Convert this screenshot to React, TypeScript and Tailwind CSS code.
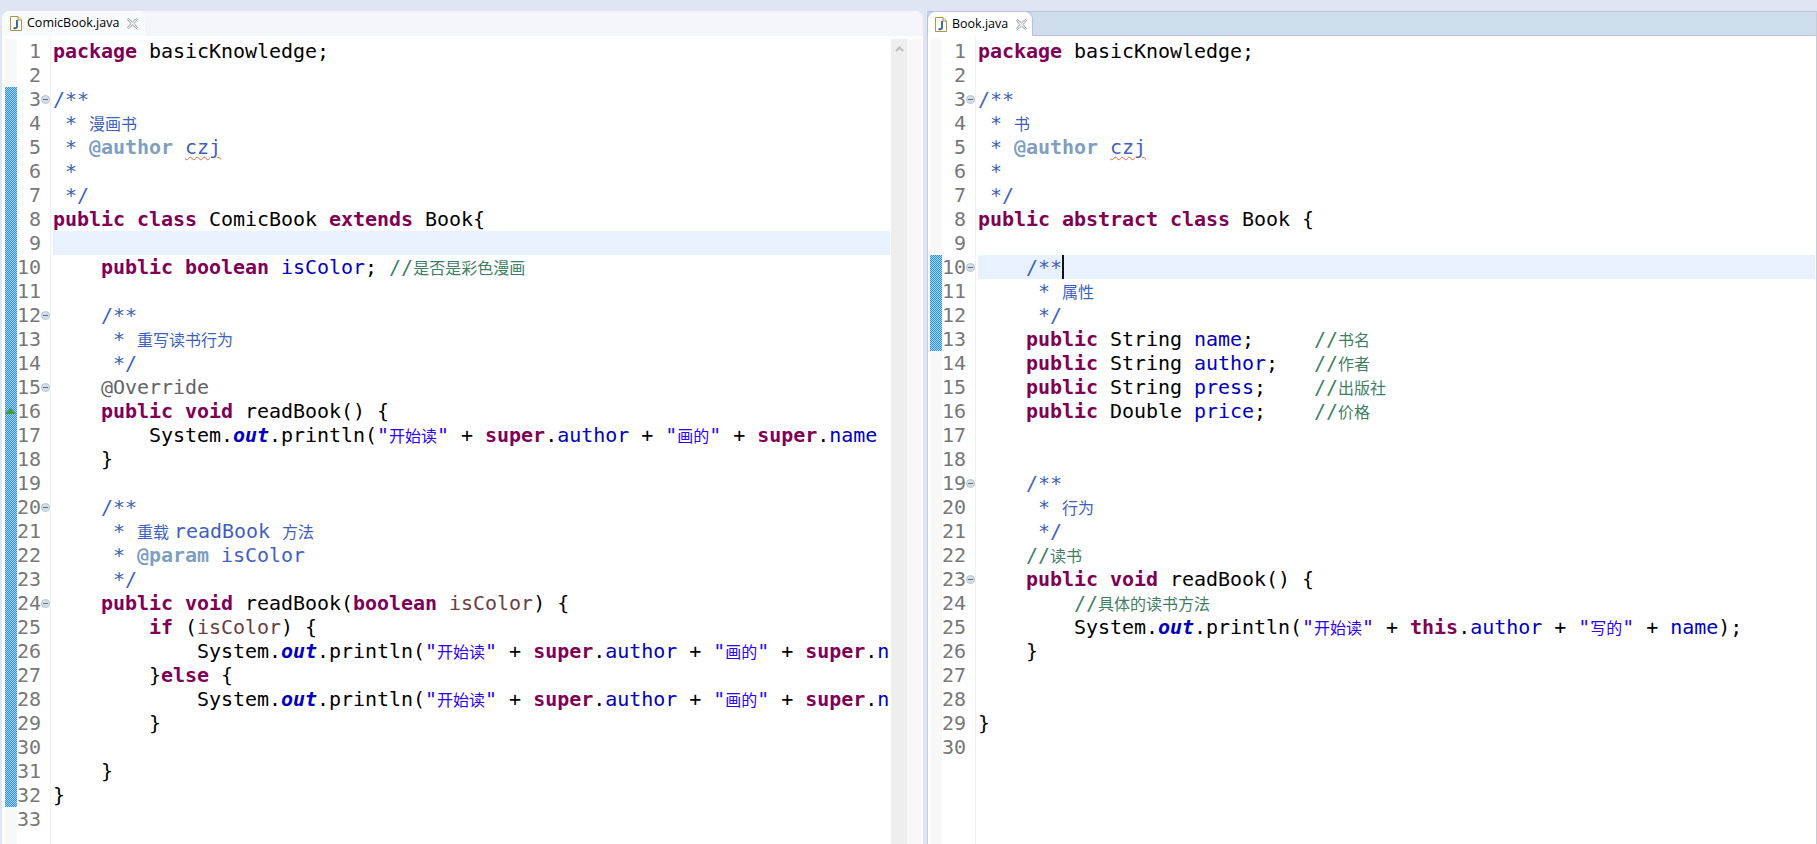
import React from "react";

type Tok = [string, string];
type Line = Tok[];

const STYLE: Record<string, string> = {
  d: "text-black",
  k: "text-[#7f0055] font-bold",
  f: "text-[#0000c0]",
  o: "text-[#0000c0] italic font-bold",
  s: "text-[#2a00ff]",
  j: "text-[#3f5fbf]",
  t: "text-[#7f9fbf] font-bold",
  c: "text-[#3f7f5f]",
  a: "text-[#646464]",
  v: "text-[#6a3e3e]",
  w: "text-[#3f5fbf] underline decoration-wavy decoration-[#e8603c] decoration-1 underline-offset-2",
};

function Tk({ kind, text }: { kind: string; text: string }) {
  if (kind === "gap") return <span className="inline-block w-[5px]" />;
  if (kind === "caret") return <span className="inline-block w-[2px] h-[24px] -mr-[2px] bg-[#111] align-top" />;
  const parts = text.split(/([\u4e00-\u9fff]+)/).filter(Boolean);
  return (
    <span className={STYLE[kind]}>
      {parts.map((p, i) =>
        /[\u4e00-\u9fff]/.test(p) ? (
          <span key={i} className="text-[16px] tracking-normal font-normal not-italic font-['Noto_Sans_CJK_SC',sans-serif]">
            {p}
          </span>
        ) : (
          <span key={i}>{p}</span>
        )
      )}
    </span>
  );
}

const L_PRINT = (ind: string, n: string): Line => [
  [ind + "System.", "d"],
  ["out", "o"],
  [".println(", "d"],
  ['"开始读"', "s"],
  [" + ", "d"],
  ["super", "k"],
  [".", "d"],
  ["author", "f"],
  [" + ", "d"],
  ['"画的"', "s"],
  [" + ", "d"],
  ["super", "k"],
  [".", "d"],
  [n, "f"],
];

const LEFT: Line[] = [
  [["package", "k"], [" basicKnowledge;", "d"]],
  [],
  [["/**", "j"]],
  [[" * 漫画书", "j"]],
  [[" * ", "j"], ["@author", "t"], [" ", "j"], ["czj", "w"]],
  [[" *", "j"]],
  [[" */", "j"]],
  [["public", "k"], [" ", "d"], ["class", "k"], [" ComicBook ", "d"], ["extends", "k"], [" Book{", "d"]],
  [],
  [["    ", "d"], ["public", "k"], [" ", "d"], ["boolean", "k"], [" ", "d"], ["isColor", "f"], ["; ", "d"], ["//是否是彩色漫画", "c"]],
  [],
  [["    /**", "j"]],
  [["     * 重写读书行为", "j"]],
  [["     */", "j"]],
  [["    @Override", "a"]],
  [["    ", "d"], ["public", "k"], [" ", "d"], ["void", "k"], [" readBook() {", "d"]],
  L_PRINT("        ", "name"),
  [["    }", "d"]],
  [],
  [["    /**", "j"]],
  [["     * 重载", "j"], ["", "gap"], ["readBook 方法", "j"]],
  [["     * ", "j"], ["@param", "t"], [" isColor", "j"]],
  [["     */", "j"]],
  [["    ", "d"], ["public", "k"], [" ", "d"], ["void", "k"], [" readBook(", "d"], ["boolean", "k"], [" ", "d"], ["isColor", "v"], [") {", "d"]],
  [["        ", "d"], ["if", "k"], [" (", "d"], ["isColor", "v"], [") {", "d"]],
  L_PRINT("            ", "n"),
  [["        }", "d"], ["else", "k"], [" {", "d"]],
  L_PRINT("            ", "n"),
  [["        }", "d"]],
  [],
  [["    }", "d"]],
  [["}", "d"]],
  [],
];

const field = (type: string, name: string, pad: string, cmt: string): Line => [
  ["    ", "d"],
  ["public", "k"],
  [" " + type + " ", "d"],
  [name, "f"],
  [";" + pad, "d"],
  [cmt, "c"],
];

const RIGHT: Line[] = [
  [["package", "k"], [" basicKnowledge;", "d"]],
  [],
  [["/**", "j"]],
  [[" * 书", "j"]],
  [[" * ", "j"], ["@author", "t"], [" ", "j"], ["czj", "w"]],
  [[" *", "j"]],
  [[" */", "j"]],
  [["public", "k"], [" ", "d"], ["abstract", "k"], [" ", "d"], ["class", "k"], [" Book {", "d"]],
  [],
  [["    /**", "j"], ["", "caret"]],
  [["     * 属性", "j"]],
  [["     */", "j"]],
  field("String", "name", "     ", "//书名"),
  field("String", "author", "   ", "//作者"),
  field("String", "press", "    ", "//出版社"),
  field("Double", "price", "    ", "//价格"),
  [],
  [],
  [["    /**", "j"]],
  [["     * 行为", "j"]],
  [["     */", "j"]],
  [["    //读书", "c"]],
  [["    ", "d"], ["public", "k"], [" ", "d"], ["void", "k"], [" readBook() {", "d"]],
  [["        ", "d"], ["//具体的读书方法", "c"]],
  [
    ["        System.", "d"],
    ["out", "o"],
    [".println(", "d"],
    ['"开始读"', "s"],
    [" + ", "d"],
    ["this", "k"],
    [".", "d"],
    ["author", "f"],
    [" + ", "d"],
    ['"写的"', "s"],
    [" + ", "d"],
    ["name", "f"],
    [");", "d"],
  ],
  [["    }", "d"]],
  [],
  [],
  [["}", "d"]],
  [],
];

function JavaIcon() {
  return (
    <svg width="12" height="15" viewBox="0 0 12 15" className="shrink-0">
      <path d="M0.5 0.5H8L11.5 4V14.5H0.5Z" fill="#fdfcf6" stroke="#b0954f" />
      <path d="M8 0.5V4H11.5" fill="#efe6c8" stroke="#b0954f" />
      <path d="M7 4V10.5C7 12 5.5 12.5 3.5 12" fill="none" stroke="#3a6ea5" strokeWidth="2" />
    </svg>
  );
}

function CloseIcon() {
  return (
    <svg width="11" height="11" viewBox="0 0 11 11" className="shrink-0">
      <path
        d="M1.5 0.5L5.5 3.8L9.5 0.5L10.5 1.5L7.2 5.5L10.5 9.5L9.5 10.5L5.5 7.2L1.5 10.5L0.5 9.5L3.8 5.5L0.5 1.5Z"
        fill="#f3f5f7"
        stroke="#8f979f"
        strokeWidth="0.9"
      />
    </svg>
  );
}

function Fold() {
  return (
    <span className="w-[9px] h-[9px] rounded-full bg-[#d3dde5] border border-[#b7c4ce] flex items-center justify-center">
      <span className="w-[5px] h-px bg-[#5f7383]" />
    </span>
  );
}

function Gutter({ count, folds, changeTop, changeHeight, marker }: { count: number; folds: number[]; changeTop: string; changeHeight: string; marker?: boolean }) {
  return (
    <>
      <div className="relative w-3 shrink-0 mt-[3px] bg-[#f8f8f8]">
        <div className={changeTop} />
        <div className={`${changeHeight} bg-[repeating-conic-gradient(#2c8fe0_0_25%,#a8d4f5_0_50%)] bg-[length:2px_2px]`} />
        {marker && (
          <svg width="11" height="6" viewBox="0 0 11 6" className="absolute left-0 top-[369px]">
            <path d="M5.5 0L11 6H0Z" fill="#3f9a3a" />
          </svg>
        )}
      </div>
      <div className="w-[34px] shrink-0 pt-[3px] border-r border-[#f0f0f0]">
        {Array.from({ length: count }, (_, i) => (
          <div key={i} className="h-6 flex items-center">
            <span className="w-6 text-right text-[#787878] tracking-normal">{i + 1}</span>
            {folds.includes(i + 1) && <Fold />}
          </div>
        ))}
      </div>
    </>
  );
}

function Code({ lines, hl, trail }: { lines: Line[]; hl: number; trail: string }) {
  return (
    <div className={`flex-1 min-w-0 ml-[2px] pt-[3px] overflow-hidden ${trail}`}>
      {lines.map((line, i) => (
        <div key={i} className={`h-6 whitespace-pre ${i + 1 === hl ? "bg-[#e8f2fe]" : ""}`}>
          {line.map(([t, k], j) => (
            <Tk key={j} kind={k} text={t} />
          ))}
        </div>
      ))}
    </div>
  );
}

export default function App() {
  const mono = "font-['DejaVu_Sans_Mono',monospace] text-[20px] leading-6 tracking-[-0.04px]";
  const tabFont = "font-['Open_Sans',sans-serif] text-[12.5px] text-black";
  return (
    <div className="w-[1817px] h-[844px] overflow-hidden bg-[#dfe5f3] flex pt-[11px] pl-[2px]">
      {/* left editor */}
      <div className="w-[921px] shrink-0 flex flex-col bg-white rounded-t-lg">
        <div className="h-[25px] shrink-0 flex bg-[#f3f5fb] rounded-t-lg">
          <div className={`w-[143px] flex items-center pl-2 bg-[#f9fafc] rounded-t-lg ${tabFont}`}>
            <JavaIcon />
            <span className="ml-[5px] w-[94px] whitespace-nowrap">ComicBook.java</span>
            <span className="ml-[6px]">
              <CloseIcon />
            </span>
          </div>
        </div>
        <div className={`flex-1 min-h-0 flex pl-[3px] ${mono}`}>
          <Gutter count={33} folds={[3, 12, 15, 20, 24]} changeTop="h-[48px]" changeHeight="h-[720px]" marker />
          <Code lines={LEFT} hl={9} trail="mr-px" />
          <div className="w-4 shrink-0 mt-[3px] bg-[#eeeeee] flex justify-center pt-[7px]">
            <svg width="9" height="6" viewBox="0 0 9 6">
              <path d="M1 5L4.5 1.5L8 5" fill="none" stroke="#bdbdbd" strokeWidth="2" />
            </svg>
          </div>
          <div className="w-[14px] shrink-0 mt-[3px] mr-[2px] bg-[#f8f8f8]" />
        </div>
      </div>
      {/* gap */}
      <div className="w-1 shrink-0" />
      {/* right editor */}
      <div className="flex-1 min-w-0 flex flex-col bg-white border-l border-r border-[#c6ccd8]">
        <div className="h-[25px] shrink-0 flex bg-[#cfdeed] border-t border-b border-[#b9c1d2]">
          <div className={`w-[106px] -mt-px h-[25px] flex items-center pl-[7px] bg-white border border-b-0 border-[#b9c1d2] rounded-t-lg -ml-px ${tabFont}`}>
            <JavaIcon />
            <span className="ml-[5px] w-[58px] whitespace-nowrap">Book.java</span>
            <span className="ml-[6px]">
              <CloseIcon />
            </span>
          </div>
        </div>
        <div className={`flex-1 min-h-0 flex pl-[2px] pr-[1px] ${mono}`}>
          <Gutter count={30} folds={[3, 10, 19, 23]} changeTop="h-[216px]" changeHeight="h-[96px]" />
          <Code lines={RIGHT} hl={10} trail="" />
        </div>
      </div>
    </div>
  );
}
